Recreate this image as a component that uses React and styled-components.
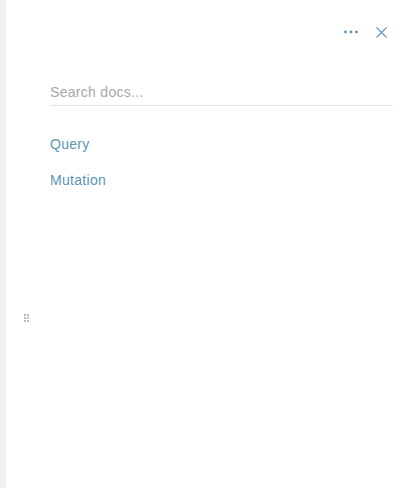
import React from 'react';
import styled, { createGlobalStyle } from 'styled-components';

const GlobalStyle = createGlobalStyle`
  html, body {
    margin: 0;
    padding: 0;
    background: #ffffff;
    font-family: "Liberation Sans", Arial, sans-serif;
  }
`;

const LINK_COLOR = '#6095b3';

const Layout = styled.div`
  display: flex;
  width: 420px;
  height: 488px;
  overflow: hidden;
`;

const Gutter = styled.div`
  flex: 0 0 6px;
  background-color: #f0f0f0;
`;

const Panel = styled.div`
  position: relative;
  flex: 1 1 auto;
  display: flex;
  flex-direction: column;
  background-color: #ffffff;
`;

const ResizeHandle = styled.div`
  position: absolute;
  left: 18px;
  top: 314px;
  display: grid;
  grid-template-columns: 2px 2px;
  grid-auto-rows: 2px;
  gap: 1px;
`;

const HandleDot = styled.span`
  background-color: #b8b8b8;
`;

const Toolbar = styled.div`
  display: flex;
  justify-content: flex-end;
  align-items: center;
  gap: 10px;
  height: 24px;
  padding: 20px 29px 0 0;
`;

const IconButton = styled.button`
  display: flex;
  align-items: center;
  justify-content: center;
  width: 20px;
  height: 20px;
  padding: 0;
  border: none;
  background: transparent;
  cursor: pointer;
`;

const Content = styled.div`
  display: flex;
  flex-direction: column;
  padding: 38px 27px 0 44px;
`;

const SearchInput = styled.input`
  border: none;
  border-bottom: 1px solid #e6e6e6;
  outline: none;
  padding: 0 0 3px 0;
  height: 20px;
  line-height: 20px;
  font-family: inherit;
  font-size: 14px;
  letter-spacing: 0.3px;
  color: #333;
  background: transparent;

  &::placeholder {
    color: #a8a8a8;
  }
`;

const TypeList = styled.ul`
  list-style: none;
  margin: 28px 0 0 0;
  padding: 0;
  display: flex;
  flex-direction: column;
  gap: 16px;
`;

const TypeLink = styled.li`
  font-size: 14px;
  line-height: 20px;
  letter-spacing: 0.3px;
  color: ${LINK_COLOR};
  cursor: pointer;
`;

function MoreIcon() {
  return (
    <svg width="14" height="4" viewBox="0 0 14 4">
      <circle cx="1.5" cy="2" r="1.4" fill={LINK_COLOR} />
      <circle cx="7" cy="2" r="1.4" fill={LINK_COLOR} />
      <circle cx="12.5" cy="2" r="1.4" fill={LINK_COLOR} />
    </svg>
  );
}

function CloseIcon() {
  return (
    <svg width="11" height="11" viewBox="0 0 11 11">
      <path d="M0.5 0.5 L10.5 10.5 M10.5 0.5 L0.5 10.5" stroke={LINK_COLOR} strokeWidth="1.1" fill="none" />
    </svg>
  );
}

export default function App() {
  return (
    <>
      <GlobalStyle />
      <Layout>
        <Gutter />
        <Panel>
          <ResizeHandle>
            {Array.from({ length: 6 }).map((_, i) => (
              <HandleDot key={i} />
            ))}
          </ResizeHandle>
          <Toolbar>
            <IconButton>
              <MoreIcon />
            </IconButton>
            <IconButton>
              <CloseIcon />
            </IconButton>
          </Toolbar>
          <Content>
            <SearchInput placeholder="Search docs..." />
            <TypeList>
              <TypeLink>Query</TypeLink>
              <TypeLink>Mutation</TypeLink>
            </TypeList>
          </Content>
        </Panel>
      </Layout>
    </>
  );
}
